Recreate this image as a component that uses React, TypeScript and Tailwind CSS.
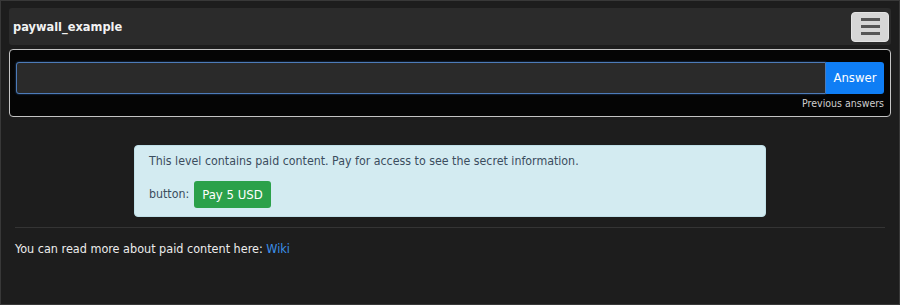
import React from "react";

export default function App() {
  return (
    <div
      className="w-[900px] h-[305px] bg-[#1d1d1d] border border-[#383838] box-border overflow-hidden px-[8px] pt-[7px]"
      style={{ fontFamily: '"DejaVu Sans Condensed", "DejaVu Sans", sans-serif' }}
    >
      <div className="h-[37px] bg-[#2b2b2b] rounded-[3px] flex items-center justify-between pl-[4px] pr-[2px]">
        <span className="text-[#f2f2f2] text-[12.7px] font-bold pt-[1px]">
          paywall_example
        </span>
        <button className="w-[38px] h-[30px] bg-[#d6d6d6] border border-[#e4e4e4] rounded-[4px] flex flex-col items-center justify-center gap-[4.5px]">
          <span className="block w-[19px] h-[2.5px] bg-[#555]" />
          <span className="block w-[19px] h-[2.5px] bg-[#555]" />
          <span className="block w-[19px] h-[2.5px] bg-[#555]" />
        </button>
      </div>
      <div className="mt-[4px] h-[68px] bg-[#050505] border border-[#c4c4c4] rounded-[4px] px-[6px] pt-[12px]">
        <div className="flex h-[32px]">
          <div className="flex-1 bg-[#2a2a2a] border border-[#4d7bb8] rounded-l-[3px] shadow-[0_0_2px_#2d5a94]" />
          <button className="w-[58px] bg-[#0f7ef5] text-white text-[13px] rounded-r-[3px]">
            Answer
          </button>
        </div>
        <div className="text-right text-[#cfcfcf] text-[10.5px] leading-[13px] mt-[3px]">
          Previous answers
        </div>
      </div>
      <div className="flex justify-center mt-[28px]">
        <div className="w-[632px] h-[72px] bg-[#d3ebf1] rounded-[4px] border border-[#bfe0e8] px-[14px] pt-[7px] text-[#3b4d5e] text-[12.3px]">
          <div className="leading-[16px]">
            This level contains paid content. Pay for access to see the secret information.
          </div>
          <div className="flex items-center mt-[12px] gap-[5px]">
            <span>button:</span>
            <button className="h-[27px] px-[8px] bg-[#2ba14a] text-white text-[13px] rounded-[3px]">
              Pay 5 USD
            </button>
          </div>
        </div>
      </div>
      <div className="mx-[6px] mt-[10px] border-t border-[#343434]" />
      <div className="mx-[6px] mt-[12px] text-[#ececec] text-[12.5px]">
        You can read more about paid content here:{" "}
        <a className="text-[#3b8fe8]">Wiki</a>
      </div>
    </div>
  );
}
